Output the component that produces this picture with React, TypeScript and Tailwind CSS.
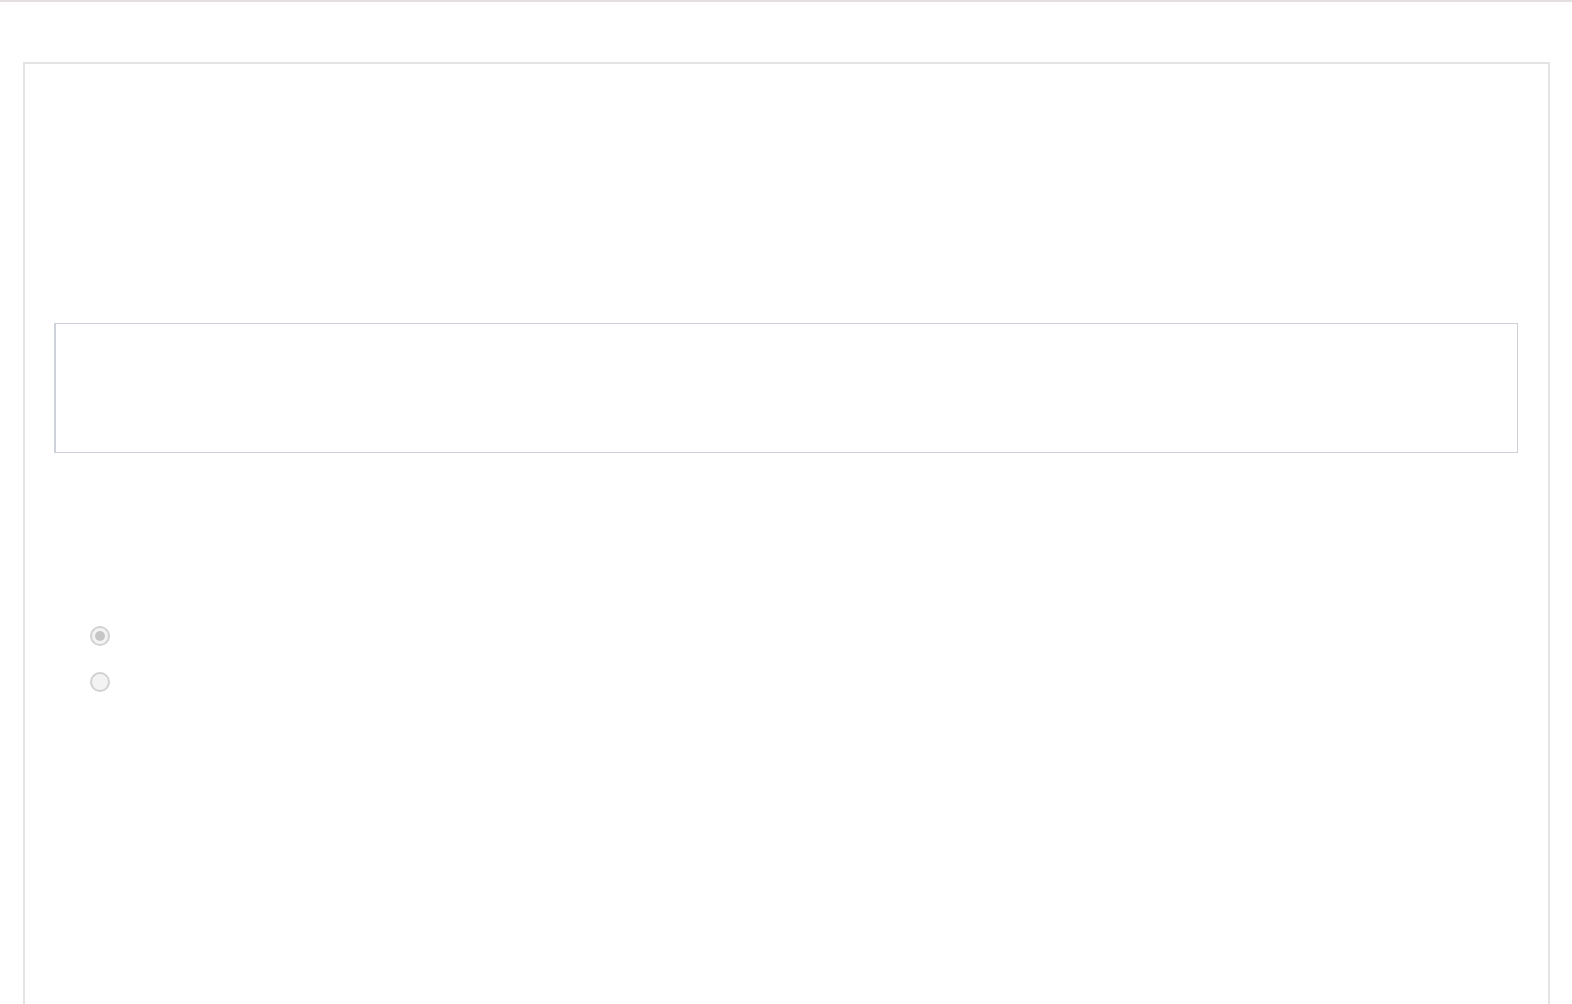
import React from 'react';

const Radio = ({ checked }: { checked?: boolean }) => (
  <div className="w-5 h-5 rounded-full border-2 border-[#d2d2d2] bg-[#f3f3f3] flex items-center justify-center">
    {checked && <div className="w-[10px] h-[10px] rounded-full bg-[#c6c6c6]" />}
  </div>
);

const App: React.FC = () => {
  return (
    <div className="min-h-screen bg-white font-['Liberation_Sans',sans-serif]">
      <div className="h-[2px] bg-[#e3dfdf]" />
      <div className="mt-[60px] ml-[23px] mr-[22px] h-[960px] border-2 border-[#e4e4e4] border-b-0 pl-[29px] pr-[30px] pt-[259px]">
        <div className="h-[130px] border border-[#cdd1d9] border-l-2 bg-white" />
        <div className="mt-[173px] ml-[36px] flex flex-col gap-[26px]">
          <Radio checked />
          <Radio />
        </div>
      </div>
    </div>
  );
};

export default App;
